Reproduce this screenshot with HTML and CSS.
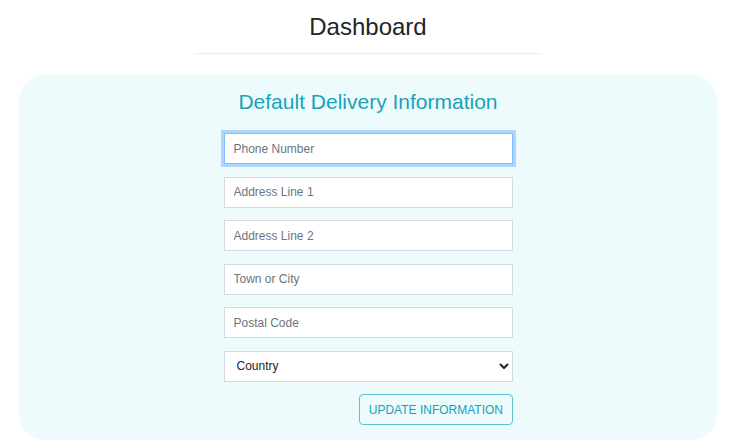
FILE: index.html
```html
<!DOCTYPE html>
<html lang="en">
<head>
<meta charset="utf-8">
<title>Dashboard</title>
<link rel="stylesheet" href="styles.css">
</head>
<body>
<div class="page">
  <header class="page-header">
    <h1 class="page-title">Dashboard</h1>
    <hr class="divider">
  </header>
  <section class="panel">
    <h2 class="panel-title">Default Delivery Information</h2>
    <form class="form">
      <input class="field field-focus" type="text" placeholder="Phone Number">
      <input class="field" type="text" placeholder="Address Line 1">
      <input class="field" type="text" placeholder="Address Line 2">
      <input class="field" type="text" placeholder="Town or City">
      <input class="field" type="text" placeholder="Postal Code">
      <select class="field select">
        <option>Country</option>
      </select>
      <div class="actions">
        <button type="button" class="btn">Update Information</button>
      </div>
    </form>
  </section>
</div>
</body>
</html>
```

FILE: styles.css
```css
* { box-sizing: border-box; }
html, body {
  margin: 0;
  padding: 0;
  background: #fff;
  font-family: "Liberation Sans", Arial, sans-serif;
  color: #212529;
}
.page {
  width: 736px;
  display: flex;
  flex-direction: column;
  align-items: center;
}
.page-header {
  display: flex;
  flex-direction: column;
  align-items: center;
  padding-top: 13px;
}
.page-title {
  margin: 0;
  font-size: 24px;
  font-weight: 400;
  line-height: 28px;
  color: #212529;
}
.divider {
  width: 348px;
  margin: 12px 0 0;
  border: 0;
  border-top: 1px solid #ececec;
}
.panel {
  width: 698px;
  margin-top: 21px;
  background: #eefbfd;
  border-radius: 26px;
  display: flex;
  flex-direction: column;
  align-items: center;
  padding: 14px 0 15px;
}
.panel-title {
  margin: 0;
  font-size: 21px;
  font-weight: 400;
  line-height: 26px;
  color: #17a2b8;
}
.form {
  width: 289px;
  margin-top: 18px;
  display: flex;
  flex-direction: column;
  gap: 12.5px;
}
.field {
  width: 100%;
  height: 31px;
  margin: 0;
  padding: 0 9px;
  font-family: "Liberation Sans", Arial, sans-serif;
  font-size: 12px;
  color: #495057;
  background: #fff;
  border: 1px solid #d4dadf;
  border-radius: 0;
  outline: none;
}
.field::placeholder { color: #6c757d; }
.field-focus {
  border-color: #80bdff;
  box-shadow: 0 0 0 3px #acd6fd;
}
.select {
  padding: 0 8px;
  color: #212529;
}
.actions {
  display: flex;
  justify-content: flex-end;
}
.btn {
  height: 31px;
  padding: 0 8.5px;
  font-family: "Liberation Sans", Arial, sans-serif;
  font-size: 12px;
  text-transform: uppercase;
  color: #17a2b8;
  background: transparent;
  border: 1px solid #5ec3d1;
  border-radius: 4px;
}
```
